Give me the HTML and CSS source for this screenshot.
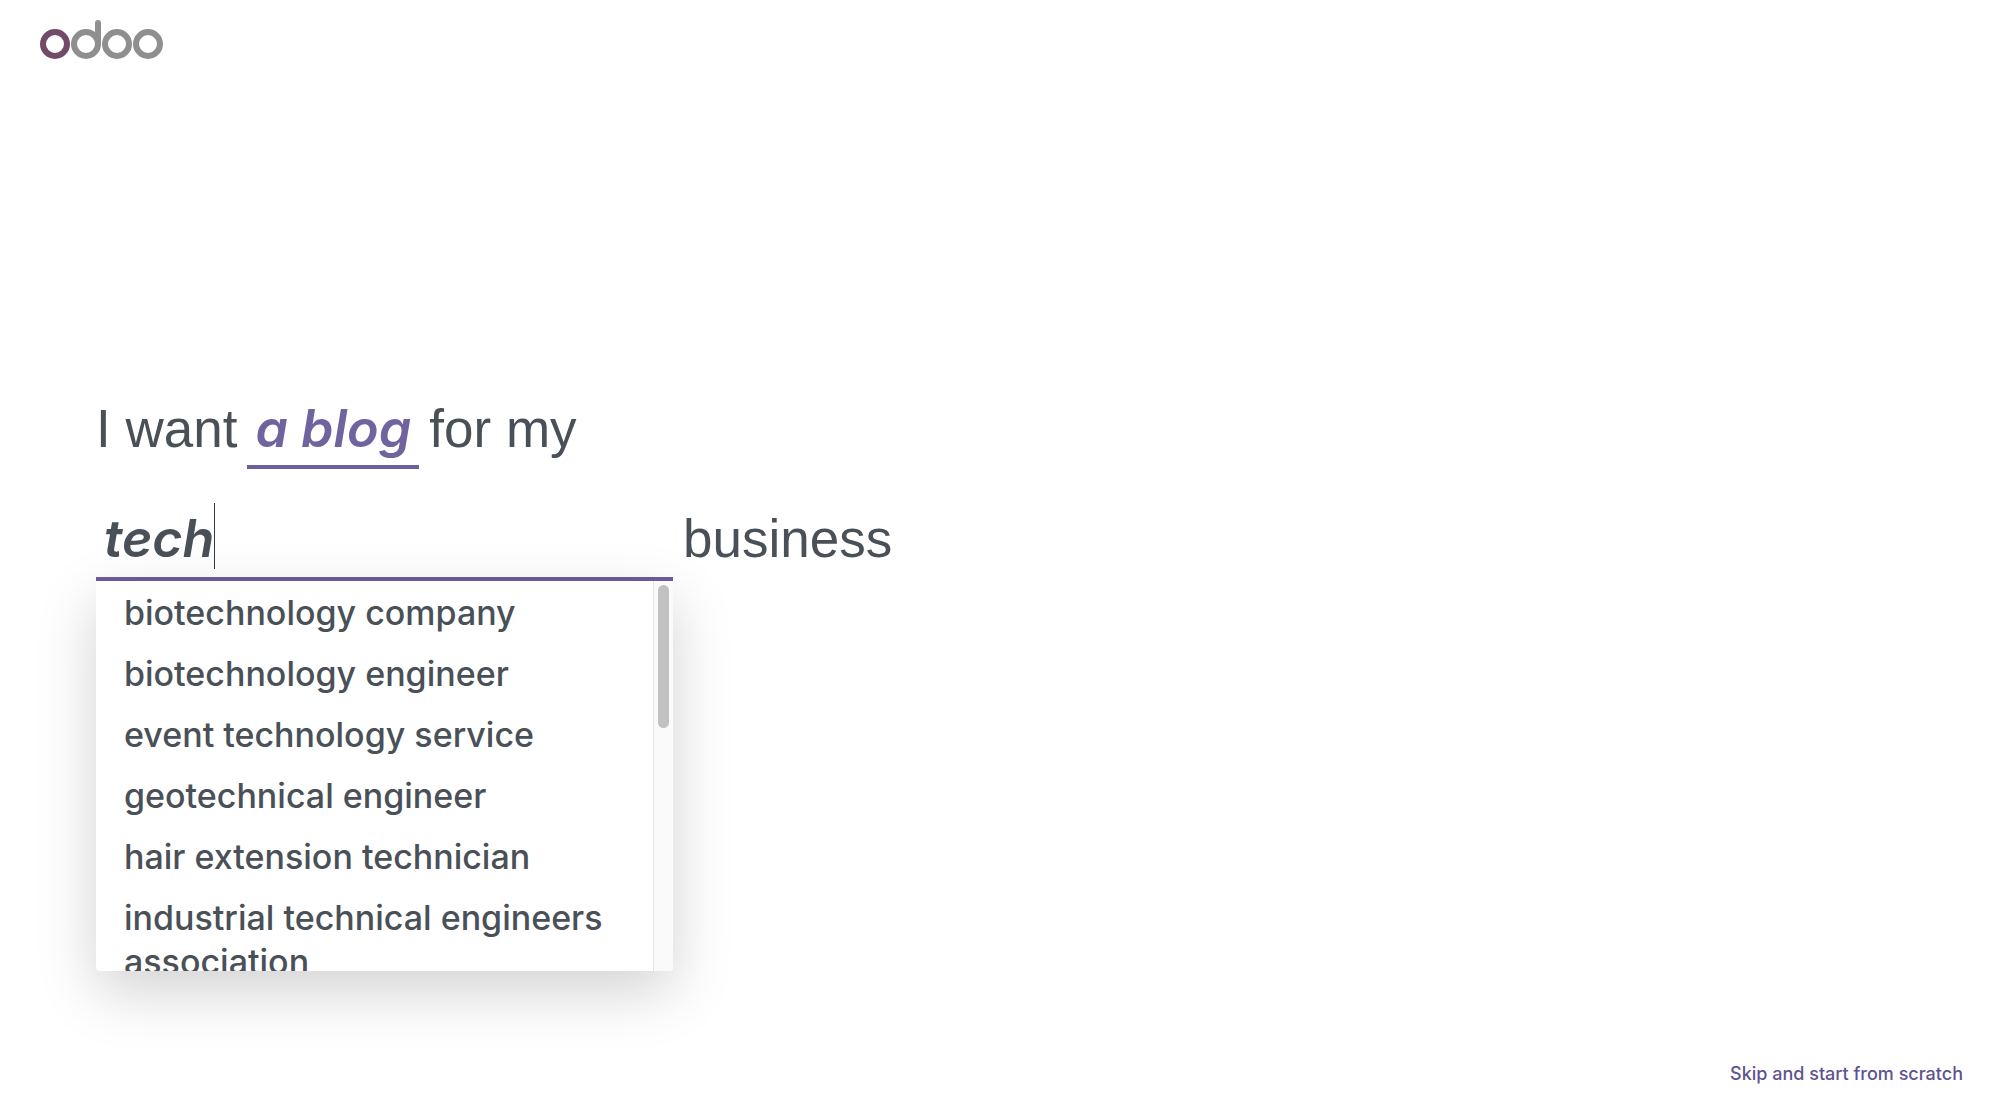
FILE: index.html
```
<!DOCTYPE html>
<html lang="en">
<head>
  <meta charset="utf-8">
  <title>Website Configurator</title>
  <meta name="viewport" content="width=device-width, initial-scale=1">
  <link rel="stylesheet" href="styles.css">
</head>
<body>
  <header class="header">
    <a class="logo" href="#" aria-label="odoo">
      <svg width="124" height="40" viewBox="0 0 124 40" fill="none" stroke="#8f8f8f" stroke-width="6">
        <circle cx="15" cy="24" r="12" stroke="#714b67"/>
        <circle cx="46" cy="24" r="12"/>
        <path d="M58 24V3" stroke-linecap="round"/>
        <circle cx="77" cy="24" r="12"/>
        <circle cx="108" cy="24" r="12"/>
      </svg>
    </a>
  </header>

  <main class="configurator">
    <div class="line">
      <span>I want</span>
      <button class="type-button" type="button">a blog</button>
      <span>for my</span>
    </div>
    <div class="line">
      <div class="industry">
        <input class="industry-input" type="text" value="tech" aria-label="Industry" autocomplete="off">
        <span class="caret"></span>
        <div class="dropdown">
          <ul class="options">
            <li><a href="#">biotechnology company</a></li>
            <li><a href="#">biotechnology engineer</a></li>
            <li><a href="#">event technology service</a></li>
            <li><a href="#">geotechnical engineer</a></li>
            <li><a href="#">hair extension technician</a></li>
            <li><a href="#">industrial technical engineers association</a></li>
          </ul>
          <div class="scrollbar"><div class="thumb"></div></div>
        </div>
      </div>
      <span>business</span>
    </div>
  </main>

  <footer class="footer">
    <a class="skip" href="#">Skip and start from scratch</a>
  </footer>
</body>
</html>
```
FILE: styles.css
```
* {
  box-sizing: border-box;
}

body {
  margin: 0;
  min-height: 100vh;
  display: flex;
  flex-direction: column;
  background: #fff;
  color: #495057;
  font-family: Inter, "Liberation Sans", sans-serif;
}

a {
  color: inherit;
  text-decoration: none;
}

.header {
  padding: 20px 40px;
}

.logo svg {
  display: block;
}

/* Sentence */
.configurator {
  flex: 1;
  display: flex;
  flex-direction: column;
  justify-content: center;
  gap: 36px;
  padding: 0 96px 166px;
}

.line {
  display: flex;
  align-items: baseline;
  gap: 10px;
  font-family: "Liberation Sans", sans-serif;
  font-size: 53px;
  line-height: 68px;
}

.type-button {
  padding: 0 8px 2px;
  border: 0;
  border-bottom: 4px solid #6f5d9c;
  background: none;
  color: #71639e;
  font: italic 600 52px/68px Inter, "Liberation Sans", sans-serif;
}

.industry {
  position: relative;
  width: 577px;
}

.industry-input {
  display: block;
  width: 100%;
  padding: 0 8px 4px;
  border: 0;
  border-bottom: 4px solid #6f5d9c;
  outline: none;
  background: none;
  color: #495057;
  font: italic 600 52px/68px Inter, "Liberation Sans", sans-serif;
}

.caret {
  position: absolute;
  top: -2px;
  left: 118px;
  width: 1px;
  height: 66px;
  background: #343a40;
}

/* Industry suggestions */
.dropdown {
  position: absolute;
  top: 100%;
  left: 0;
  width: 100%;
  height: 390px;
  display: flex;
  overflow: hidden;
  border-radius: 0 0 4px 4px;
  background: #fff;
  box-shadow: 0 20px 60px rgba(0, 0, 0, 0.18);
  font-family: Inter, "Liberation Sans", sans-serif;
}

.options {
  flex: 1;
  margin: 0;
  padding: 2px 0;
  list-style: none;
}

.options a {
  display: block;
  padding: 8px 28px 9px;
  font-size: 34px;
  font-weight: 500;
  line-height: 44px;
}

.scrollbar {
  width: 20px;
  padding: 4px;
  border-left: 1px solid #e4e4e4;
  background: #fafafa;
}

.thumb {
  width: 11px;
  height: 143px;
  border-radius: 6px;
  background: #c1c1c1;
}

.footer {
  padding: 0 37px 12px;
  text-align: right;
}

.skip {
  color: #5f5290;
  font-size: 18px;
  font-weight: 500;
  line-height: 24px;
}
```
